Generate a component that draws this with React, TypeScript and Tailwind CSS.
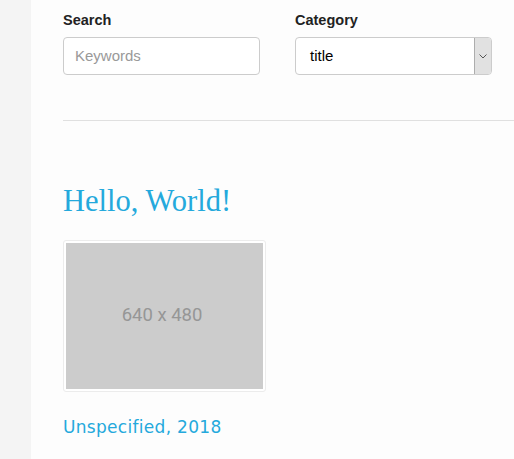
import React from "react";

export default function App() {
  return (
    <div className="flex w-[514px] h-[459px] overflow-hidden bg-[#fdfdfd]" style={{ fontFamily: '"Liberation Sans", Arial, sans-serif' }}>
      <div className="w-[31px] shrink-0 bg-[#f4f4f4]" />
      <div className="flex-1 pl-[32px] pt-[12px] min-w-0">
        <div className="flex gap-[35px]">
          <div className="w-[197px]">
            <div className="text-[14.5px] font-bold text-[#222] leading-[16px] mb-[9px]">Search</div>
            <div className="h-[38px] border border-[#ccc] rounded-[4px] bg-white flex items-center pl-[11px] text-[15px] text-[#999]">Keywords</div>
          </div>
          <div className="w-[197px]">
            <div className="text-[14.5px] font-bold text-[#222] leading-[16px] mb-[9px]">Category</div>
            <div className="h-[38px] border border-[#ccc] rounded-[4px] bg-white flex items-center text-[15px] text-black overflow-hidden">
              <span className="flex-1 pl-[14px]">title</span>
              <div className="w-[17px] h-full bg-[#e1e1e1] border-l border-[#adadad] flex items-center justify-center">
                <svg width="8" height="5" viewBox="0 0 8 5"><path d="M0.5 0.5 L4 4 L7.5 0.5" fill="none" stroke="#555" strokeWidth="1" /></svg>
              </div>
            </div>
          </div>
        </div>
        <div className="mt-[45px] border-t border-[#e0e0e0] mr-[-20px]" />
        <h1 className="mt-[62px] text-[30.5px] leading-[36px] text-[#24a9dc]" style={{ fontFamily: '"Liberation Serif", "Times New Roman", serif' }}>Hello, World!</h1>
        <div className="mt-[21px] w-[203px] border border-[#ececec] rounded-[3px] p-[2px] bg-white">
          <div className="h-[146px] bg-[#cccccc] flex items-center justify-center pr-[5px] text-[18.5px] text-[#969696]" style={{ fontFamily: 'Roboto, sans-serif' }}>640 x 480</div>
        </div>
        <div className="mt-[23px] text-[17px] text-[#24a9dc] tracking-[0.3px]" style={{ fontFamily: '"DejaVu Sans", Verdana, sans-serif' }}>Unspecified, 2018</div>
      </div>
    </div>
  );
}
